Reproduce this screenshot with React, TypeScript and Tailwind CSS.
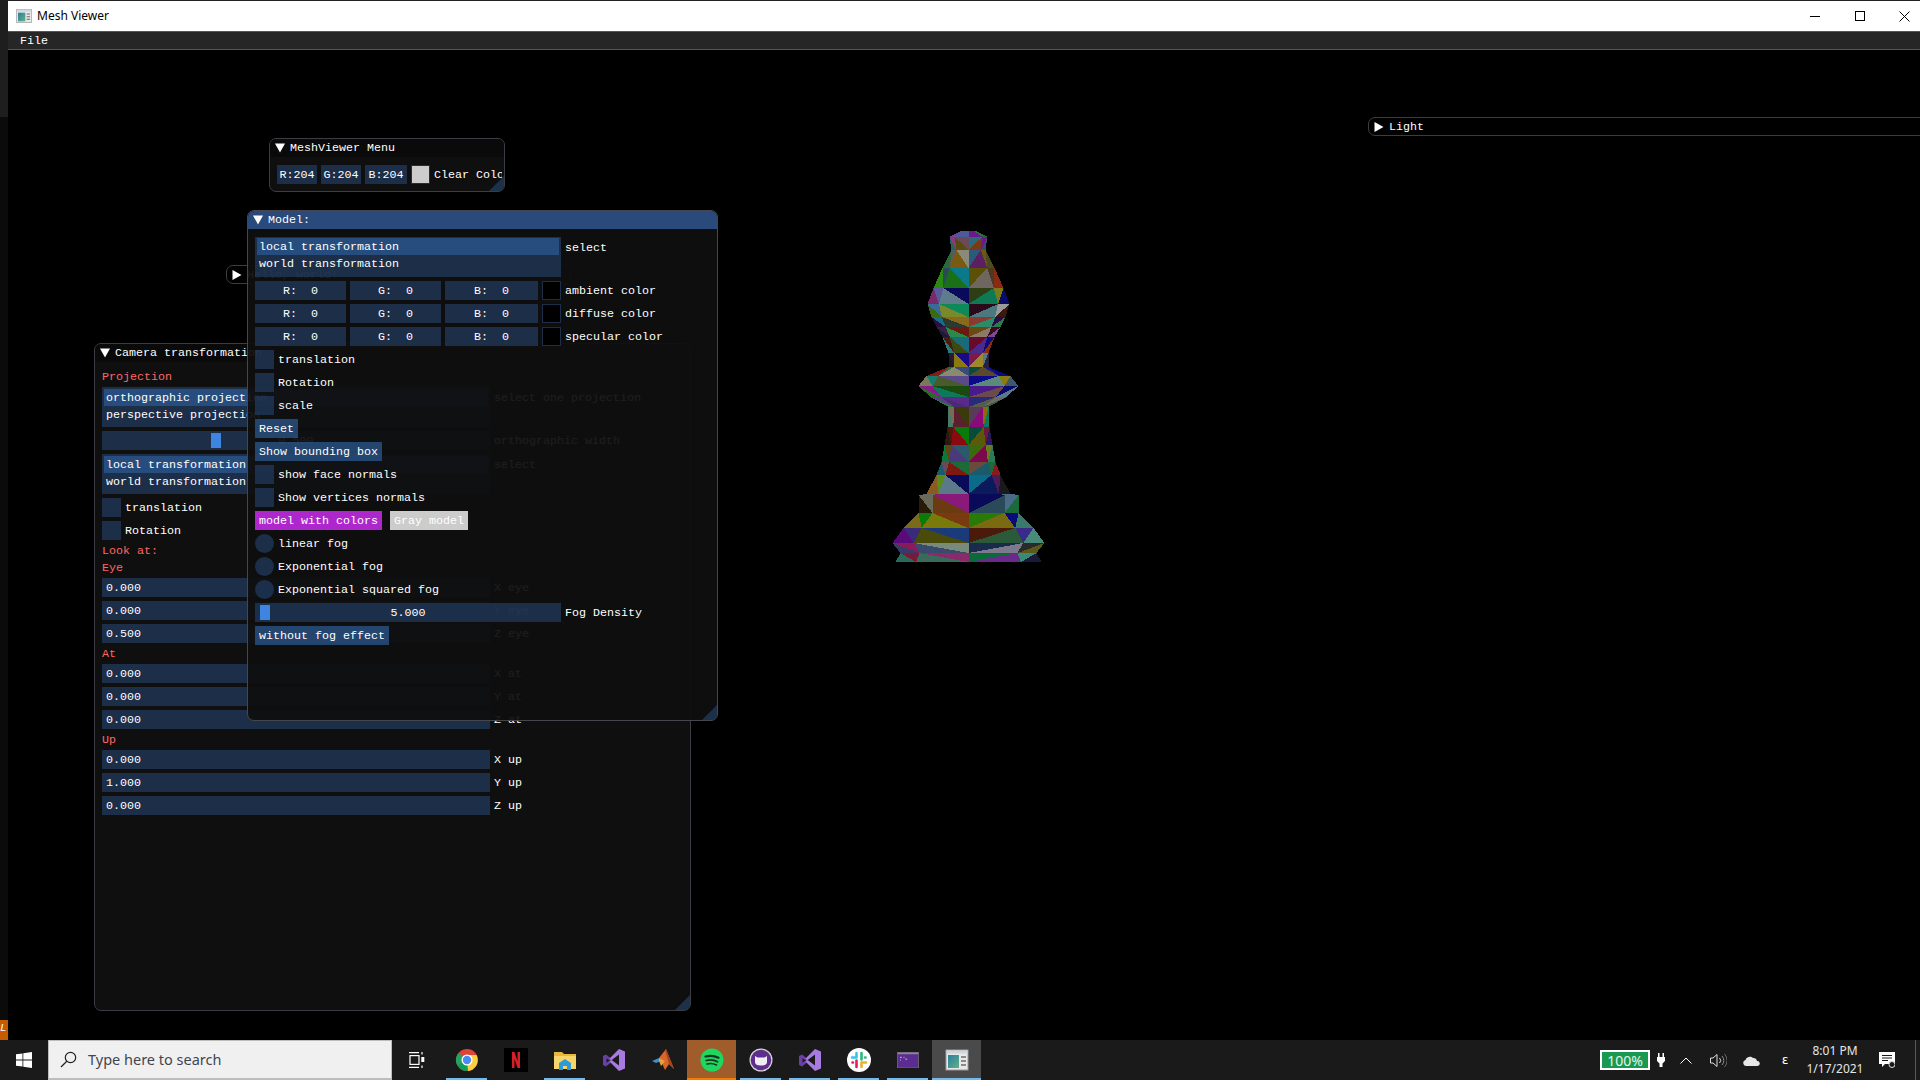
import type { ReactNode } from "react";

// colours are ImGui's default dark style, alpha blended like the real thing
const frame = "bg-[rgba(41,74,122,0.54)]";
const button = "bg-[rgba(66,150,250,0.4)]";
const selected = "bg-[rgba(66,150,250,0.31)]";
const rowH = "h-[19px]";

const Down = () => (
  <svg width="10" height="10" viewBox="0 0 10 10" className="shrink-0">
    <polygon points="0,0.5 10,0.5 5,9.5" fill="#fff" />
  </svg>
);

const Right = () => (
  <svg width="10" height="10" viewBox="0 0 10 10" className="shrink-0">
    <polygon points="0.5,0 9.5,5 0.5,10" fill="#fff" />
  </svg>
);

const Grip = () => (
  <div className="absolute bottom-0 right-0 h-[15px] w-[15px] bg-[rgba(66,150,250,0.25)] [clip-path:polygon(100%_0,100%_100%,0_100%)]" />
);

const Label = ({ children, red }: { children: ReactNode; red?: boolean }) => (
  <div className={`h-[13px] leading-[15px] ${red ? "text-[#ff6666]" : ""}`}>{children}</div>
);

const Check = ({ label }: { label: string }) => (
  <div className={`flex items-center gap-[4px] ${rowH}`}>
    <div className={`h-[19px] w-[19px] ${frame}`} />
    <span className="pt-[2px]">{label}</span>
  </div>
);

const Radio = ({ label }: { label: string }) => (
  <div className={`flex items-center gap-[4px] ${rowH}`}>
    <div className={`h-[19px] w-[19px] rounded-full ${frame}`} />
    <span className="pt-[2px]">{label}</span>
  </div>
);

const Btn = ({ label, className }: { label: string; className?: string }) => (
  <div className={`flex items-center px-[4px] pt-[2px] ${rowH} ${className ?? button}`}>{label}</div>
);

const NumberRow = ({ value, label }: { value: string; label: string }) => (
  <div className={`flex items-center gap-[4px] ${rowH}`}>
    <div className={`flex h-full w-[388px] items-center px-[4px] pt-[2px] ${frame}`}>{value}</div>
    <span className="pt-[2px]">{label}</span>
  </div>
);

const ListBox = ({ first, second, label }: { first: string; second: string; label: string }) => (
  <div className="flex items-start gap-[4px]">
    <div className={`h-[40px] w-[306px] pt-[1px] ${frame}`}>
      <div className={`mx-[2px] flex h-[17px] items-center px-[2px] pt-[2px] ${selected}`}>{first}</div>
      <div className="flex h-[17px] items-center px-[4px] pt-[2px]">{second}</div>
    </div>
    <span className="mt-[3px]">{label}</span>
  </div>
);

const CameraListBox = ({ first, second, label }: { first: string; second: string; label: string }) => (
  <div className="flex items-start gap-[4px]">
    <div className={`h-[40px] w-[388px] pt-[2px] ${frame}`}>
      <div className={`mx-[2px] flex h-[17px] items-center px-[2px] pt-[2px] ${selected}`}>{first}</div>
      <div className="flex h-[17px] items-center px-[4px] pt-[2px]">{second}</div>
    </div>
    <span className="mt-[3px]">{label}</span>
  </div>
);

const ColorRow = ({ label }: { label: string }) => (
  <div className={`flex items-center gap-[4px] ${rowH}`}>
    <div className={`flex h-full w-[91px] items-center justify-center whitespace-pre pt-[2px] ${frame}`}>{"R:  0"}</div>
    <div className={`flex h-full w-[91px] items-center justify-center whitespace-pre pt-[2px] ${frame}`}>{"G:  0"}</div>
    <div className={`flex h-full w-[93px] items-center justify-center whitespace-pre pt-[2px] ${frame}`}>{"B:  0"}</div>
    <div className="h-[19px] w-[19px] border border-[#1d2e48] bg-black" />
    <span className="pt-[2px]">{label}</span>
  </div>
);

const CameraWindow = () => (
  <div className="absolute left-[86px] top-[293px] h-[668px] w-[597px] overflow-hidden rounded-[7px] border border-[#3c3c44] bg-[#0f0f0f]">
    <div className="flex h-[18px] items-center gap-[5px] bg-[#0a0a0a] pl-[5px]">
      <Down />
      <span className="pt-[2px]">Camera transformation</span>
    </div>
    <div className="flex flex-col gap-[4px] px-[7px] pt-[8px]">
      <Label red>Projection</Label>
      <CameraListBox first="orthographic projection" second="perspective projection" label="select one projection" />
      <div className={`flex items-center gap-[4px] ${rowH}`}>
        <div className={`relative flex h-full w-[388px] items-center justify-center pt-[2px] ${frame}`}>
          0.500
          <div className="absolute left-[109px] top-[2px] h-[15px] w-[10px] bg-[#3d85e0]" />
        </div>
        <span className="pt-[2px]">orthographic width</span>
      </div>
      <CameraListBox first="local transformation" second="world transformation" label="select" />
      <Check label="translation" />
      <Check label="Rotation" />
      <Label red>Look at:</Label>
      <Label red>Eye</Label>
      <NumberRow value="0.000" label="X eye" />
      <NumberRow value="0.000" label="Y eye" />
      <NumberRow value="0.500" label="Z eye" />
      <Label red>At</Label>
      <NumberRow value="0.000" label="X at" />
      <NumberRow value="0.000" label="Y at" />
      <NumberRow value="0.000" label="Z at" />
      <Label red>Up</Label>
      <NumberRow value="0.000" label="X up" />
      <NumberRow value="1.000" label="Y up" />
      <NumberRow value="0.000" label="Z up" />
    </div>
    <Grip />
  </div>
);

const ModelWindow = () => (
  <div className="absolute left-[239px] top-[160px] h-[511px] w-[471px] overflow-hidden rounded-[7px] border border-[#46464e] bg-[rgba(15,15,15,0.94)]">
    <div className="flex h-[18px] items-center gap-[5px] bg-[#294a7a] pl-[5px]">
      <Down />
      <span className="pt-[2px]">Model:</span>
    </div>
    <div className="flex flex-col gap-[4px] px-[7px] pt-[8px]">
      <ListBox first="local transformation" second="world transformation" label="select" />
      <ColorRow label="ambient color" />
      <ColorRow label="diffuse color" />
      <ColorRow label="specular color" />
      <Check label="translation" />
      <Check label="Rotation" />
      <Check label="scale" />
      <div className="flex"><Btn label="Reset" /></div>
      <div className="flex"><Btn label="Show bounding box" /></div>
      <Check label="show face normals" />
      <Check label="Show vertices normals" />
      <div className="flex gap-[8px]">
        <Btn label="model with colors" className="bg-[#ae27cc]" />
        <Btn label="Gray model" className="bg-[#cccccc]" />
      </div>
      <Radio label="linear fog" />
      <Radio label="Exponential fog" />
      <Radio label="Exponential squared fog" />
      <div className={`flex items-center gap-[4px] ${rowH}`}>
        <div className={`relative flex h-full w-[306px] items-center justify-center pt-[2px] ${frame}`}>
          5.000
          <div className="absolute left-[5px] top-[2px] h-[15px] w-[10px] bg-[#3d85e0]" />
        </div>
        <span className="pt-[2px]">Fog Density</span>
      </div>
      <div className="flex"><Btn label="without fog effect" /></div>
    </div>
    <Grip />
  </div>
);

const MenuWindow = () => (
  <div className="absolute left-[261px] top-[88px] h-[54px] w-[236px] overflow-hidden rounded-[7px] border border-[#3c3c44] bg-[#0f0f0f]">
    <div className="flex h-[18px] items-center gap-[5px] bg-[#0a0a0a] pl-[5px]">
      <Down />
      <span className="pt-[2px]">MeshViewer Menu</span>
    </div>
    <div className="flex items-center gap-[4px] pl-[7px] pt-[8px]">
      <div className={`flex h-[19px] w-[40px] items-center justify-center pt-[2px] ${frame}`}>R:204</div>
      <div className={`flex h-[19px] w-[40px] items-center justify-center pt-[2px] ${frame}`}>G:204</div>
      <div className={`flex h-[19px] w-[42px] items-center justify-center pt-[2px] ${frame}`}>B:204</div>
      <div className="h-[19px] w-[19px] border border-[#1d2e48] bg-[#cccccc]" />
      <div className="w-[68px] overflow-hidden whitespace-pre pt-[2px]">Clear Color</div>
    </div>
    <Grip />
  </div>
);

const CollapsedWindow = ({ label, className }: { label: string; className: string }) => (
  <div className={`absolute flex h-[19px] items-center gap-[5px] rounded-[7px] border border-[#3c3c44] bg-black pl-[5px] ${className}`}>
    <Right />
    <span className="pt-[2px]">{label}</span>
  </div>
);

// low poly bishop: half widths of the lathe rings, as seen on screen
const rings: [number, number][] = [
  [231, 8], [237, 19], [250, 17], [268, 26], [288, 35], [304, 41], [317, 37], [327, 32], [337, 26],
  [353, 20], [367, 20], [376, 42], [386, 50], [397, 38], [407, 20], [427, 21], [445, 24], [462, 27],
  [475, 32], [494, 42], [495, 50], [513, 50], [528, 65], [543, 76], [553, 68], [562, 73],
];
// 8 triangle colours per band, left to right
const bands = [
  "#6a4a8a #6a4a8a #4a5a9a #4a5a9a #6a1a8a #6a1a8a #2a7a4a #2a6a3a",
  "#8a3a7a #1a6a5a #6a4a5a #5a4a10 #2a6a7a #7a3a1a #6a1a8a #3a4a6a",
  "#5a5a5a #2a6a3a #8a8a7a #7a5a10 #2a5a7a #5a2060 #6a5a10 #4a4a20",
  "#2a4a5a #2a8a10 #0a7a8a #1a7018 #5a5008 #6f6660 #4a3a20 #8a2a10",
  "#5a5a9a #7a2a6a #0a0a5a #5f7c8c #2d3d14 #0e7a55 #7a7a1a #0a0a6a",
  "#3a6a9a #3a6a10 #0e8a5a #7a8a2a #2a0a1a #4a7a80 #9a9a9a #3a1a10",
  "#1a6a8a #2a1040 #8a6a1a #2a3a30 #8a3a30 #2a8a6a #2a0a4a #2a7a4a",
  "#3a2040 #1a1a3a #6a1a10 #2a8a4a #6a4a10 #8a7a6a #3a0a20 #7a4a8a",
  "#4a1a10 #2a7a7a #1a6a7a #3a4a10 #6a0a2a #4a2a8a #0a0a7a #8a2a10",
  "#2a1a3a #1a1a20 #1a0a8a #8a7a10 #7a1a4a #9a8a2a #5a7a8a #2a2040",
  "#2a6a4a #8a1a1a #3a4a7a #8a8a70 #0a4a3a #5a4a2a #1a1a8a #0a0a7a",
  "#1a7a6a #7a7a5a #5a4a8a #4a5a2a #0a0a8a #5a8a7a #8a7a10 #3a5a6a",
  "#8a1a8a #2a6a2a #1a4a10 #0a7a5a #4a1a8a #6a4a4a #0a0a6a #5a7a8a",
  "#5a3a8a #2a7a3a #5a2a8a #4a2a70 #2a2a7a #5a5a4a #6a6a6a #3a5a3a",
  "#7a6a5a #4a7a6a #3a3a0a #5a2030 #5a3a5a #8a0a7a #8a6a0a #0a7a5a",
  "#4a1a0a #2a1a10 #0a7a0a #8a0a10 #0a4a3a #5a5a0a #6a1a3a #2a1a5a",
  "#5a4a10 #0a7a3a #2a5a6a #4a3a7a #3a6a0a #7a0a4a #6a7a20 #2a7a5a",
  "#6a4a5a #1a5a6a #1a6a3a #7a1a10 #6a4a3a #1a5a6a #1a6a3a #8a1a1a",
  "#5a8a1a #8a5a20 #0a0a5a #5a7a8a #0a6a8a #0a1a5a #4a1a5a #1a1a1a",
  "#6a6a5a #6a6a5a #8a1a7a #8a1a7a #0a0a5a #0a0a5a #4a6a8a #4a6a8a",
  "#6a6a5a #2a1a0a #8a1a7a #6a3a10 #0a0a5a #2a4a5a #4a6a8a #1a6a3a",
  "#0a7a0a #7a6a1a #7a3a10 #7a7a0a #2a7a0a #7a6a10 #0a0a7a #3a7a6a",
  "#3a2a7a #5a0a7a #1a3a7a #4a4a0a #4a1a0a #2a5a3a #3a2a8a #4a8a7a",
  "#8a1a5a #3a3a6a #7a8a7a #3a4a6a #1a2a4a #7a7a8a #2a2a2a #5a5a1a",
  "#7a1a3a #2a6a5a #8a2a6a #3a6a5a #0a6a3a #6a2a8a #3a8a7a #1a1a3a",
].map((b) => b.split(" "));
const columns = [-1, -0.72, 0, 0.72, 1];
const cx = 968.5;

const buildMesh = () => {
  const tris: { points: string; fill: string }[] = [];
  for (let r = 0; r < rings.length - 1; r++) {
    const [y0, w0] = rings[r];
    const [y1, w1] = rings[r + 1];
    for (let c = 0; c < columns.length - 1; c++) {
      const a = cx + columns[c] * w0;
      const b = cx + columns[c + 1] * w0;
      const d = cx + columns[c] * w1;
      const e = cx + columns[c + 1] * w1;
      if (c < 2) {
        tris.push({ points: `${a},${y0} ${b},${y0} ${e},${y1}`, fill: bands[r][c * 2] });
        tris.push({ points: `${a},${y0} ${e},${y1} ${d},${y1}`, fill: bands[r][c * 2 + 1] });
      } else {
        tris.push({ points: `${a},${y0} ${b},${y0} ${d},${y1}`, fill: bands[r][c * 2] });
        tris.push({ points: `${b},${y0} ${e},${y1} ${d},${y1}`, fill: bands[r][c * 2 + 1] });
      }
    }
  }
  return tris;
};
const mesh = buildMesh();

const Bishop = () => (
  <svg viewBox="880 225 180 340" shapeRendering="crispEdges" className="absolute left-[872px] top-[175px] h-[340px] w-[180px]">
    {mesh.map((t, i) => (
      <polygon key={i} points={t.points} fill={t.fill} />
    ))}
  </svg>
);

const MeshIcon = ({ size }: { size: number }) => (
  <svg width={size} height={size} viewBox="0 0 24 24">
    <defs>
      <linearGradient id="meshg" x1="0" y1="0" x2="1" y2="1">
        <stop offset="0" stopColor="#2c7f9c" />
        <stop offset="1" stopColor="#5fb08a" />
      </linearGradient>
    </defs>
    <rect x="1" y="2" width="22" height="20" fill="#e8e8e8" stroke="#9a9a9a" />
    <rect x="1.5" y="2.5" width="21" height="3" fill="#cfd6dc" />
    <rect x="3" y="7" width="11" height="13" fill="url(#meshg)" />
    <rect x="16" y="8" width="5" height="2" fill="#8a8a8a" />
    <rect x="16" y="12" width="5" height="2" fill="#8a8a8a" />
    <rect x="16" y="16" width="5" height="2" fill="#8a8a8a" />
  </svg>
);

const VsIcon = () => (
  <svg width="24" height="24" viewBox="0 0 24 24">
    <path d="M1 8l3-1.500 5 4-1.500 2-3-2.200v4.500l3-2.200 1.500 2-5 4-3-1.500z" fill="#6b3fa8" />
    <path d="M17 1l6 2.500v17L17 23 7.500 13.500 9 11.500l8 6V6.500l-8 6-1.500-2z" fill="#a77be0" />
  </svg>
);

const taskIcons: { icon: ReactNode; line?: string; bg?: string }[] = [
  {
    line: "bg-[#76b9ed]",
    icon: (
      <svg width="24" height="24" viewBox="0 0 24 24">
        <circle cx="12" cy="12" r="11" fill="#db4437" />
        <path d="M12 12L2.500 17.500A11 11 0 0 1 3.500 5z" fill="#1fa463" />
        <path d="M12 12l-9.500 5.500A11 11 0 0 0 13 23z" fill="#0f9d58" />
        <path d="M12 7h9.500a11 11 0 0 1-8.500 16l-1-11z" fill="#ffcd40" />
        <circle cx="12" cy="12" r="5.500" fill="#fff" />
        <circle cx="12" cy="12" r="4.200" fill="#4a8af4" />
      </svg>
    ),
  },
  {
    icon: (
      <svg width="24" height="24" viewBox="0 0 24 24">
        <rect width="24" height="24" fill="#000" />
        <path d="M8 4h2.500l3 9V4H16v16h-2.500l-3-9v9H8z" fill="#d81f26" />
      </svg>
    ),
  },
  {
    line: "bg-[#76b9ed]",
    icon: (
      <svg width="24" height="24" viewBox="0 0 24 24">
        <path d="M1 4h8l2 2h12v15H1z" fill="#e8b83c" />
        <rect x="1" y="8" width="22" height="13" fill="#f6d56b" />
        <path d="M6 15l6-4 6 4v7h-4v-4h-4v4H6z" fill="#2f9ad8" />
      </svg>
    ),
  },
  { icon: <VsIcon /> },
  {
    icon: (
      <svg width="24" height="24" viewBox="0 0 24 24">
        <path d="M1 13l7-3 2 3-5 2z" fill="#3d8fd0" />
        <path d="M8 10l7-9 8 20-5-5-4 6-4-9z" fill="#d9662a" />
        <path d="M14 2l1-1 8 20-5-5z" fill="#a8431b" />
        <path d="M8 10l6 3-4 5-2-5z" fill="#e8a03a" />
      </svg>
    ),
  },
  {
    line: "bg-[#f57c00]",
    bg: "bg-[#a05c2a]",
    icon: (
      <svg width="24" height="24" viewBox="0 0 24 24">
        <circle cx="12" cy="12" r="11.500" fill="#1ed760" />
        <g fill="none" stroke="#15331f" strokeLinecap="round">
          <path d="M5.500 8.500c4.500-1.200 9-.8 13 1.200" strokeWidth="2.200" />
          <path d="M6.200 12.500c4-1 8-.6 11.300 1.200" strokeWidth="1.800" />
          <path d="M7 16c3.300-.8 6.600-.4 9.500 1" strokeWidth="1.500" />
        </g>
      </svg>
    ),
  },
  {
    line: "bg-[#76b9ed]",
    icon: (
      <svg width="24" height="24" viewBox="0 0 24 24">
        <circle cx="12" cy="12" r="11.500" fill="#d8d8d8" />
        <circle cx="12" cy="12" r="10.300" fill="#5f2d8c" />
        <path d="M6 8l2.500 1.500h7L18 8v6c0 2.500-2 3.500-6 3.500S6 16.500 6 14z" fill="#f0ecf4" />
      </svg>
    ),
  },
  { line: "bg-[#76b9ed]", icon: <VsIcon /> },
  {
    line: "bg-[#76b9ed]",
    icon: (
      <svg width="24" height="24" viewBox="0 0 24 24">
        <circle cx="12" cy="12" r="12" fill="#fff" />
        <g strokeWidth="2.600" strokeLinecap="round">
          <path d="M9.500 5v4.500M5 9.500h4" stroke="#36c5f0" />
          <path d="M14.500 5v6.500M18.500 9.500h-.5" stroke="#2eb67d" />
          <path d="M14.500 19v-4.500M19 14.500h-4" stroke="#ecb22e" />
          <path d="M9.500 19v-6.500M5.500 14.500h.5" stroke="#e01e5a" />
        </g>
      </svg>
    ),
  },
  {
    line: "bg-[#76b9ed]",
    icon: (
      <svg width="22" height="16" viewBox="0 0 24 18">
        <rect width="24" height="18" fill="#5c2d91" stroke="#6e6e6e" />
        <rect x="0.500" y="0.500" width="23" height="2" fill="#8a8a8a" />
        <path d="M3 6h2M3 9h1M7 6h1M9 8h2" stroke="#d8d8d8" />
      </svg>
    ),
  },
  { line: "bg-[#76b9ed]", bg: "bg-[#4a4a4a]", icon: <MeshIcon size={24} /> },
];

const Taskbar = () => (
  <div className="flex h-[40px] shrink-0 items-stretch bg-[#1a1a1a] font-['Noto_Sans',sans-serif] text-white">
    <div className="flex w-[48px] items-center justify-center">
      <svg width="16" height="16" viewBox="0 0 16 16" fill="#fff">
        <path d="M0 2.300l6.500-.9v6.200H0zM7.300 1.300L16 0v7.600H7.300zM0 8.400h6.500v6.200L0 13.700zM7.300 8.400H16V16l-8.700-1.300z" />
      </svg>
    </div>
    <div className="flex w-[344px] items-center border-x border-t border-b-2 border-[#bdbdbd] bg-[#f0f0f0] pl-[11px]">
      <svg width="17" height="17" viewBox="0 0 17 17" fill="none" stroke="#222" strokeWidth="1.200">
        <circle cx="10.500" cy="6.500" r="5.200" />
        <path d="M6.800 10.300L1 16" />
      </svg>
      <span className="ml-[11px] text-[14.500px] text-[#3f4650]">Type here to search</span>
    </div>
    <div className="flex w-[50px] items-center justify-center">
      <svg width="16" height="16" viewBox="0 0 16 16" fill="none" stroke="#fff" strokeWidth="1.200">
        <path d="M0 .6h10M0 15.400h10" />
        <rect x="1" y="3.600" width="9" height="8.800" />
        <path d="M13 0v2.500M13 13.500V16" />
        <rect x="12.300" y="5" width="3" height="5" fill="#fff" stroke="none" />
      </svg>
    </div>
    {taskIcons.map((t, i) => (
      <div key={i} className={`relative flex w-[49px] items-center justify-center ${t.bg ?? ""}`}>
        {t.icon}
        {t.line && <div className={`absolute bottom-0 h-[2px] ${t.bg ? "inset-x-0" : "inset-x-[4px]"} ${t.line}`} />}
      </div>
    ))}
    <div className="ml-auto flex items-center">
      <div className="flex h-[20px] w-[50px] items-center justify-center border-2 border-white bg-[#1a9a50] text-[14px] text-[#e8f4ea]">100%</div>
      <div className="w-[2px]" />
      <div className="flex w-[18px] justify-center">
        <svg width="8" height="14" viewBox="0 0 8 14" fill="#fff">
          <path d="M1 0h1.500v4h3V0H7v4h1v4l-2.500 2.500V14h-3v-3.500L0 8V4h1z" />
        </svg>
      </div>
      <div className="flex w-[37px] justify-center pr-[5px]">
        <svg width="12" height="7" viewBox="0 0 12 7" fill="none" stroke="#fff" strokeWidth="1">
          <path d="M.5 6.500L6 1l5.500 5.500" />
        </svg>
      </div>
      <div className="flex w-[22px] justify-center">
        <svg width="17" height="15" viewBox="0 0 17 15" fill="none" stroke="#ddd" strokeWidth="1">
          <path d="M.5 5h2.500L7 1.500v12L3 10H.5z" />
          <path d="M9.500 5a3.500 3.500 0 0 1 0 5" />
          <path d="M12 3a6.500 6.500 0 0 1 0 9" stroke="#8a8a8a" />
          <path d="M14.500 1a9.500 9.500 0 0 1 0 13" stroke="#666" />
        </svg>
      </div>
      <div className="flex w-[49px] justify-center pr-[5px]">
        <svg width="17" height="11" viewBox="0 0 17 11" fill="#e6e6e6">
          <path d="M3 11a3 3 0 0 1-.5-5.900A4.500 4.500 0 0 1 10 3a3.800 3.800 0 0 1 4 3 2.500 2.500 0 0 1 .5 5z" />
        </svg>
      </div>
      <div className="flex w-[14px] justify-center text-[13px]">ε</div>
      <div className="flex w-[86px] flex-col items-center text-[12px] leading-[18px] text-[#e6e6e6]">
        <span>8:01 PM</span>
        <span>1/17/2021</span>
      </div>
      <div className="flex w-[18px] justify-center">
        <svg width="16" height="16" viewBox="0 0 16 16">
          <path d="M0 0h16v12H6l-3 3v-3H0z" fill="#fff" />
          <path d="M3 3.500h10M3 6h10M3 8.500h6" stroke="#1a1a1a" />
          <circle cx="13" cy="12.500" r="3" fill="#1a1a1a" stroke="#ddd" />
        </svg>
      </div>
      <div className="h-full w-[24px] pl-[19px]">
        <div className="h-full w-px bg-[#5a5a5a]" />
      </div>
    </div>
  </div>
);

const App = () => {
  return (
    <div className="flex h-[1080px] w-[1920px] flex-col overflow-hidden bg-black font-['Liberation_Mono',monospace] text-[11.67px] text-white">
      <div className="flex min-h-0 flex-1">
        <div className="flex w-[8px] shrink-0 flex-col">
          <div className="h-[117px] bg-[#1e1e1e]" />
          <div className="flex-1 bg-[#0b0b0b]" />
          <div className="h-[20px] overflow-hidden bg-[#c85a00] text-[11px] italic">L</div>
        </div>
        <div className="flex min-w-0 flex-1 flex-col">
          <div className="flex h-[32px] shrink-0 items-center border-y border-b-[#555] border-t-[#222] bg-white font-['Noto_Sans',sans-serif] text-[12px] text-black">
            <div className="ml-[8px] mr-[5px]">
              <MeshIcon size={16} />
            </div>
            <span>Mesh Viewer</span>
            <div className="ml-auto flex items-center">
              <div className="flex h-[30px] w-[45px] items-center justify-center">
                <div className="h-px w-[10px] bg-black" />
              </div>
              <div className="flex h-[30px] w-[45px] items-center justify-center">
                <div className="h-[10px] w-[10px] border border-black" />
              </div>
              <div className="flex h-[30px] w-[38px] items-center pl-[17px]">
                <svg width="11" height="11" viewBox="0 0 11 11" stroke="#000">
                  <path d="M.5.5l10 10M10.500.5l-10 10" />
                </svg>
              </div>
            </div>
          </div>
          <div className="flex h-[18px] shrink-0 items-center border-b border-b-[#555] bg-[#262626] pl-[12px] pt-[2px]">File</div>
          <div className="relative min-h-0 flex-1 bg-black">
            <CollapsedWindow label="Light" className="left-[1360px] top-[67px] w-[600px]" />
            <CameraWindow />
            <CollapsedWindow label="Hello, world!" className="left-[218px] top-[215px] w-[345px]" />
            <ModelWindow />
            <MenuWindow />
            <Bishop />
          </div>
        </div>
      </div>
      <Taskbar />
    </div>
  );
};

export default App;
